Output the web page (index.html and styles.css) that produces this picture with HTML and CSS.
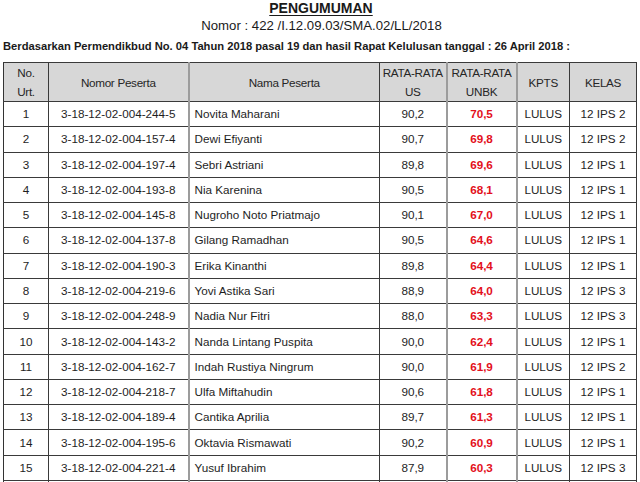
FILE: index.html
```html
<!DOCTYPE html>
<html lang="id">
<head>
<meta charset="utf-8">
<title>Pengumuman</title>
<link rel="stylesheet" href="styles.css">
</head>
<body>
<div class="page">
  <h1 class="title"><span>PENGUMUMAN</span></h1>
  <p class="nomor">Nomor : 422 /I.12.09.03/SMA.02/LL/2018</p>
  <p class="intro">Berdasarkan Permendikbud No. 04 Tahun 2018 pasal 19 dan hasil Rapat Kelulusan tanggal : 26 April 2018 :</p>
  <table class="grid">
    <colgroup>
      <col class="c-no"><col class="c-nomor"><col class="c-nama"><col class="c-us"><col class="c-unbk"><col class="c-kpts"><col class="c-kelas">
    </colgroup>
    <thead>
      <tr>
        <th>No.<br>Urt.</th>
        <th>Nomor Peserta</th>
        <th>Nama Peserta</th>
        <th>RATA-RATA<br>US</th>
        <th>RATA-RATA<br>UNBK</th>
        <th>KPTS</th>
        <th>KELAS</th>
      </tr>
    </thead>
    <tbody>
      <tr><td>1</td><td>3-18-12-02-004-244-5</td><td class="name">Novita Maharani</td><td>90,2</td><td class="red">70,5</td><td>LULUS</td><td>12 IPS 2</td></tr>
      <tr><td>2</td><td>3-18-12-02-004-157-4</td><td class="name">Dewi Efiyanti</td><td>90,7</td><td class="red">69,8</td><td>LULUS</td><td>12 IPS 2</td></tr>
      <tr><td>3</td><td>3-18-12-02-004-197-4</td><td class="name">Sebri Astriani</td><td>89,8</td><td class="red">69,6</td><td>LULUS</td><td>12 IPS 1</td></tr>
      <tr><td>4</td><td>3-18-12-02-004-193-8</td><td class="name">Nia Karenina</td><td>90,5</td><td class="red">68,1</td><td>LULUS</td><td>12 IPS 1</td></tr>
      <tr><td>5</td><td>3-18-12-02-004-145-8</td><td class="name">Nugroho Noto Priatmajo</td><td>90,1</td><td class="red">67,0</td><td>LULUS</td><td>12 IPS 1</td></tr>
      <tr><td>6</td><td>3-18-12-02-004-137-8</td><td class="name">Gilang Ramadhan</td><td>90,5</td><td class="red">64,6</td><td>LULUS</td><td>12 IPS 1</td></tr>
      <tr><td>7</td><td>3-18-12-02-004-190-3</td><td class="name">Erika Kinanthi</td><td>89,8</td><td class="red">64,4</td><td>LULUS</td><td>12 IPS 1</td></tr>
      <tr><td>8</td><td>3-18-12-02-004-219-6</td><td class="name">Yovi Astika Sari</td><td>88,9</td><td class="red">64,0</td><td>LULUS</td><td>12 IPS 3</td></tr>
      <tr><td>9</td><td>3-18-12-02-004-248-9</td><td class="name">Nadia Nur Fitri</td><td>88,0</td><td class="red">63,3</td><td>LULUS</td><td>12 IPS 3</td></tr>
      <tr><td>10</td><td>3-18-12-02-004-143-2</td><td class="name">Nanda Lintang Puspita</td><td>90,0</td><td class="red">62,4</td><td>LULUS</td><td>12 IPS 1</td></tr>
      <tr><td>11</td><td>3-18-12-02-004-162-7</td><td class="name">Indah Rustiya Ningrum</td><td>90,0</td><td class="red">61,9</td><td>LULUS</td><td>12 IPS 2</td></tr>
      <tr><td>12</td><td>3-18-12-02-004-218-7</td><td class="name">Ulfa Miftahudin</td><td>90,6</td><td class="red">61,8</td><td>LULUS</td><td>12 IPS 1</td></tr>
      <tr><td>13</td><td>3-18-12-02-004-189-4</td><td class="name">Cantika Aprilia</td><td>89,7</td><td class="red">61,3</td><td>LULUS</td><td>12 IPS 1</td></tr>
      <tr><td>14</td><td>3-18-12-02-004-195-6</td><td class="name">Oktavia Rismawati</td><td>90,2</td><td class="red">60,9</td><td>LULUS</td><td>12 IPS 1</td></tr>
      <tr><td>15</td><td>3-18-12-02-004-221-4</td><td class="name">Yusuf Ibrahim</td><td>87,9</td><td class="red">60,3</td><td>LULUS</td><td>12 IPS 3</td></tr>
      <tr class="more"><td></td><td></td><td class="name"></td><td></td><td></td><td></td><td></td></tr>
    </tbody>
  </table>
</div>
</body>
</html>
```
FILE: styles.css
```css
html, body {
  margin: 0;
  padding: 0;
  background: #ffffff;
}

.page {
  padding: 0 0 0 3px;
  font-family: "Liberation Sans", Arial, sans-serif;
  color: #1a1a1a;
}

.title {
  margin: 0;
  height: 17px;
  line-height: 17px;
  font-size: 14px;
  font-weight: 700;
  text-align: center;
  padding-right: 1px;
}

.title span {
  text-decoration: underline;
  text-underline-offset: 2px;
  text-decoration-thickness: 1px;
}

.nomor {
  margin: 0;
  height: 17px;
  line-height: 17px;
  font-size: 13.2px;
  text-align: center;
}

.intro {
  margin: 3px 0 0 0;
  line-height: 18px;
  font-size: 11.2px;
  font-weight: 700;
}

.grid {
  margin-top: 7px;
  border-collapse: collapse;
  table-layout: fixed;
  width: 633px;
  font-size: 11.7px;
  color: #1e1e1e;
  border: 1px solid #333;
}

.c-no { width: 45px; }
.c-nomor { width: 140px; }
.c-nama { width: 191px; }
.c-us { width: 67px; }
.c-unbk { width: 70px; }
.c-kpts { width: 53px; }
.c-kelas { width: 67px; }

.grid th,
.grid td {
  padding: 0;
  text-align: center;
  border-top: 1px solid #3a3a3a;
  border-bottom: 1px solid #3a3a3a;
  border-right: 1px solid #3a3a3a;
  white-space: nowrap;
}

.grid th {
  height: 38px;
  background: #d7d7d7;
  font-weight: 400;
  line-height: 19px;
  color: #262626;
  letter-spacing: -0.3px;
}

.grid td {
  height: 24.27px;
  line-height: 14px;
}

.grid th:nth-child(2),
.grid td:nth-child(2),
.grid th:nth-child(4),
.grid td:nth-child(4),
.grid th:nth-child(5),
.grid td:nth-child(5) {
  border-right: 2px solid #9c9c9c;
}

.grid td.name {
  text-align: left;
  padding-left: 5px;
}

.grid td.red {
  color: #e3101b;
  font-weight: 700;
}

.grid tr.more td {
  height: 20px;
}
```
